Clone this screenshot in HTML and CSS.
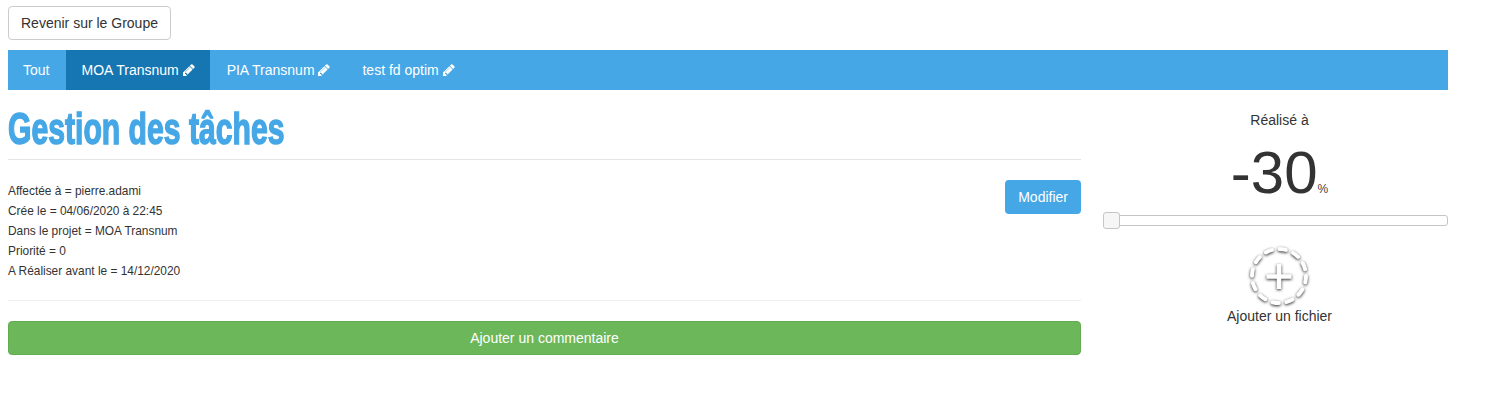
FILE: index.html
```html
<!DOCTYPE html>
<html lang="fr">
<head>
    <meta charset="UTF-8">
    <title>Gestion des tâches</title>
    <link rel="stylesheet" href="styles.css">
</head>
<body>
    <div class="page">
        <a class="btn-back" href="#">Revenir sur le Groupe</a>

        <!-- Onglets des projets -->
        <nav class="tabs">
            <a class="tab" href="#">Tout</a>
            <a class="tab active" href="#">MOA Transnum
                <svg class="pencil" viewBox="0 0 1792 1792"><path d="M491 1536l91-91-235-235-91 91v107h128v128h107zm372-928q0-22-22-22-10 0-17 7l-542 542q-7 7-7 17 0 22 22 22 10 0 17-7l542-542q7-7 7-17zm-54-192l416 416-832 832h-416v-416zm683 96q0 53-37 90l-166 166-416-416 166-165q36-38 90-38 53 0 91 38l235 234q37 39 37 91z"/></svg>
            </a>
            <a class="tab" href="#">PIA Transnum
                <svg class="pencil" viewBox="0 0 1792 1792"><path d="M491 1536l91-91-235-235-91 91v107h128v128h107zm372-928q0-22-22-22-10 0-17 7l-542 542q-7 7-7 17 0 22 22 22 10 0 17-7l542-542q7-7 7-17zm-54-192l416 416-832 832h-416v-416zm683 96q0 53-37 90l-166 166-416-416 166-165q36-38 90-38 53 0 91 38l235 234q37 39 37 91z"/></svg>
            </a>
            <a class="tab" href="#">test fd optim
                <svg class="pencil" viewBox="0 0 1792 1792"><path d="M491 1536l91-91-235-235-91 91v107h128v128h107zm372-928q0-22-22-22-10 0-17 7l-542 542q-7 7-7 17 0 22 22 22 10 0 17-7l542-542q7-7 7-17zm-54-192l416 416-832 832h-416v-416zm683 96q0 53-37 90l-166 166-416-416 166-165q36-38 90-38 53 0 91 38l235 234q37 39 37 91z"/></svg>
            </a>
        </nav>

        <div class="columns">
            <!-- Colonne principale -->
            <main class="main-col">
                <h1 class="title"><span class="title-text">Gestion des tâches</span></h1>
                <div class="details">
                    <ul class="infos">
                        <li>Affectée à = pierre.adami</li>
                        <li>Crée le = 04/06/2020 à 22:45</li>
                        <li>Dans le projet = MOA Transnum</li>
                        <li>Priorité = 0</li>
                        <li>A Réaliser avant le = 14/12/2020</li>
                    </ul>
                    <a class="btn-edit" href="#">Modifier</a>
                </div>
                <a class="btn-comment" href="#">Ajouter un commentaire</a>
            </main>

            <!-- Colonne avancement -->
            <aside class="side-col">
                <div class="done-label">Réalisé à</div>
                <div class="done-value">-30<small>%</small></div>
                <div class="slider"><span class="slider-handle"></span></div>
                <svg class="add-file" viewBox="0 0 68 68">
                    <circle class="add-ring" cx="34" cy="33" r="27"/>
                    <path class="add-plus" d="M34 21v25M21.500 33.500h25"/>
                </svg>
                <div class="add-label">Ajouter un fichier</div>
            </aside>
        </div>
    </div>
</body>
</html>
```

FILE: styles.css
```css
/* Styles généraux */
body {
    margin: 0;
    background-color: #fff;
    color: #333;
    font-family: "Liberation Sans", Arial, sans-serif;
    font-size: 14px;
}

.page {
    width: 1440px;
    margin-left: 8px;
    padding-top: 6px;
}

a {
    text-decoration: none;
}

.btn-back {
    display: inline-block;
    box-sizing: border-box;
    height: 34px;
    padding: 0 12px;
    line-height: 32px;
    color: #333;
    background-color: #fff;
    border: 1px solid #ccc;
    border-radius: 4px;
}

/* Onglets */
.tabs {
    display: flex;
    height: 40px;
    margin-top: 10px;
    background-color: #45a7e6;
}

.tab {
    margin-right: 1.5px;
    padding: 0 15.5px 0 15px;
    line-height: 40px;
    color: #fff;
}

.tab.active {
    background-color: #1676b2;
}

.pencil {
    width: 14px;
    height: 14px;
    margin: 0 -2px 0 0;
    vertical-align: -2px;
    fill: #fff;
}

/* Colonnes */
.columns {
    display: flex;
    justify-content: space-between;
}

.main-col {
    width: 1073px;
}

.side-col {
    width: 345px;
    text-align: center;
}

.title {
    margin: 0;
    height: 70px;
    line-height: 78px;
    box-sizing: border-box;
    border-bottom: 1px solid #e5e5e5;
    color: #45a7e6;
    font-size: 45px;
    font-weight: 700;
}

/* Pas de police Anton ici : Liberation Sans resserrée */
.title-text {
    display: inline-block;
    white-space: nowrap;
    transform: scaleX(0.67);
    transform-origin: left center;
    -webkit-text-stroke: 1.5px #45a7e6;
}

.details {
    display: flex;
    justify-content: space-between;
    align-items: flex-start;
    height: 141px;
    box-sizing: border-box;
    padding-top: 20px;
    border-bottom: 1px solid #eee;
}

.infos {
    margin: 1px 0 0;
    padding: 0;
    list-style: none;
    font-size: 11.9px;
    line-height: 20px;
}

.btn-edit {
    height: 34px;
    padding: 0 13px;
    line-height: 34px;
    color: #fff;
    background-color: #45a7e6;
    border-radius: 4px;
}

.btn-comment {
    display: block;
    box-sizing: border-box;
    height: 34px;
    margin-top: 20px;
    line-height: 32px;
    text-align: center;
    color: #fff;
    background-color: #6db75b;
    border: 1px solid #63ab51;
    border-radius: 4px;
}

/* Avancement */
.done-label {
    margin-top: 20px;
    padding-left: 8px;
    line-height: 20px;
}

.done-value {
    margin-top: 10px;
    padding-left: 8px;
    height: 66px;
    line-height: 66px;
    font-size: 60px;
}

.done-value small {
    font-size: 12px;
    color: #444;
}

.slider {
    position: relative;
    box-sizing: border-box;
    height: 11px;
    margin-top: 9px;
    background-color: #fff;
    border: 1px solid #c5c5c5;
    border-radius: 3px;
}

.slider-handle {
    position: absolute;
    top: -4px;
    left: -1px;
    box-sizing: border-box;
    width: 17px;
    height: 17px;
    background-color: #f6f6f6;
    border: 1px solid #c5c5c5;
    border-radius: 3px;
}

.add-file {
    display: block;
    width: 68px;
    height: 68px;
    margin: 17px auto 0;
    padding-left: 7px;
    filter: drop-shadow(0.5px 1px 1.5px rgba(0, 0, 0, 0.85));
}

.add-ring {
    fill: none;
    stroke: #fff;
    stroke-width: 4px;
    stroke-dasharray: 6.5 7.637;
    stroke-linecap: round;
}

.add-plus {
    fill: none;
    stroke: #fff;
    stroke-width: 4.5px;
}

.add-label {
    margin-top: -5px;
    padding-left: 8px;
    line-height: 20px;
}
```
